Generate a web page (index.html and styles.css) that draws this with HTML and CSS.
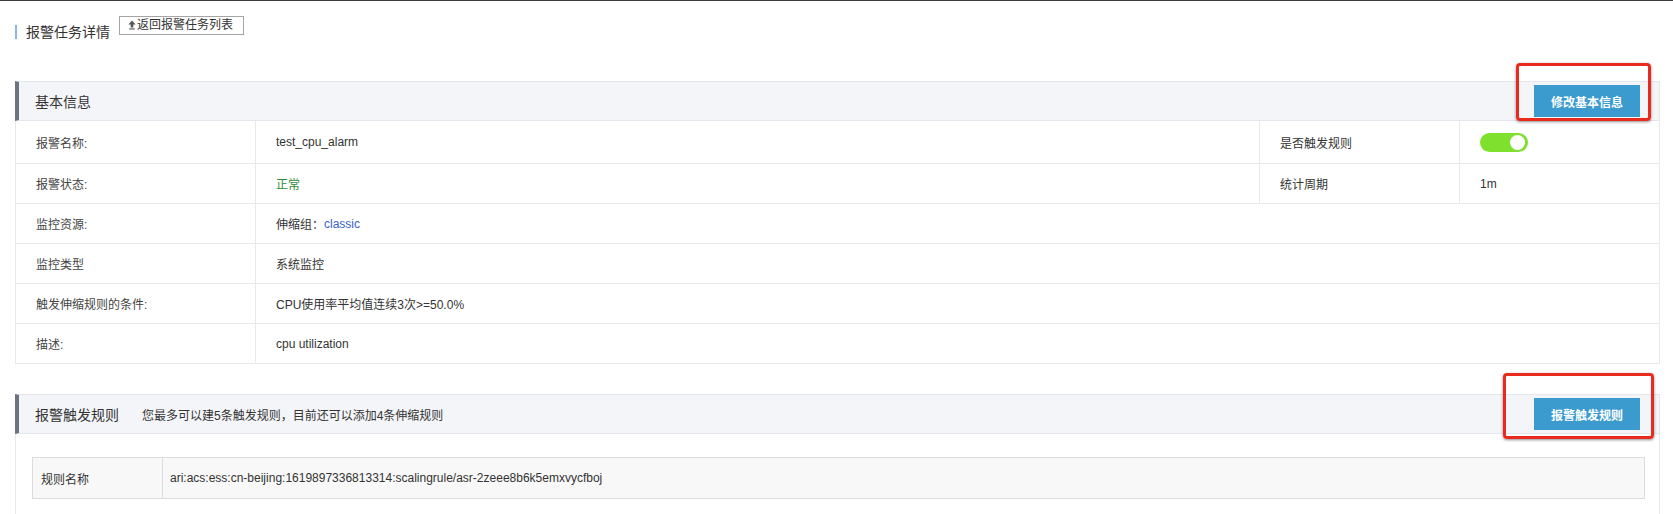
FILE: index.html
```html
<!DOCTYPE html>
<html lang="zh-CN">
<head>
<meta charset="utf-8">
<title>报警任务详情</title>
<link rel="stylesheet" href="styles.css">
</head>
<body>
<div class="topline"></div>
<div class="page">
  <div class="title-row">
    <h1 class="page-title">报警任务详情</h1>
    <button class="back-btn" type="button"><svg class="back-icon" width="8" height="10" viewBox="0 0 8 10"><path d="M4 0.5 L7.6 4.6 H5.3 V7.4 H2.7 V4.6 H0.4 Z" fill="#555"/><rect x="1.2" y="8.4" width="5.6" height="1.1" fill="#555"/></svg>返回报警任务列表</button>
  </div>

  <section class="panel panel-basic">
    <div class="panel-head">
      <span class="panel-title">基本信息</span>
      <button class="primary-btn" type="button">修改基本信息</button>
    </div>
    <div class="info-grid">
      <div class="cell label tall">报警名称:</div>
      <div class="cell tall">test_cpu_alarm</div>
      <div class="cell tall">是否触发规则</div>
      <div class="cell tall last"><span class="switch"><span class="knob"></span></span></div>

      <div class="cell label">报警状态:</div>
      <div class="cell ok">正常</div>
      <div class="cell">统计周期</div>
      <div class="cell last">1m</div>

      <div class="cell label">监控资源:</div>
      <div class="cell wide last">伸缩组：<span class="link">classic</span></div>

      <div class="cell label">监控类型</div>
      <div class="cell wide last">系统监控</div>

      <div class="cell label">触发伸缩规则的条件:</div>
      <div class="cell wide last">CPU使用率平均值连续3次&gt;=50.0%</div>

      <div class="cell label">描述:</div>
      <div class="cell wide last">cpu utilization</div>
    </div>
  </section>

  <section class="panel panel-rules">
    <div class="panel-head">
      <span class="panel-title">报警触发规则</span>
      <span class="panel-sub">您最多可以建5条触发规则，目前还可以添加4条伸缩规则</span>
      <button class="primary-btn" type="button">报警触发规则</button>
    </div>
    <div class="panel-body">
      <div class="rule-table">
        <div class="rule-label">规则名称</div>
        <div class="rule-value">ari:acs:ess:cn-beijing:1619897336813314:scalingrule/asr-2zeee8b6k5emxvycfboj</div>
      </div>
    </div>
  </section>
</div>

<div class="mark mark-1"></div>
<div class="mark mark-2"></div>
</body>
</html>
```

FILE: styles.css
```css
* { box-sizing: border-box; }

html, body {
  margin: 0;
  padding: 0;
  background: #fff;
  font-family: "Liberation Sans", "Noto Sans CJK SC", Arial, sans-serif;
  color: #333;
}

body { position: relative; overflow: hidden; }

.topline {
  height: 1px;
  background: #3d3d3d;
}

.page {
  padding: 0 13px 0 15px;
}

.title-row {
  display: flex;
  align-items: flex-start;
  padding-top: 15px;
}

.page-title {
  margin: 9px 0 0 0;
  padding-left: 9px;
  border-left: 2px solid #8ab6e0;
  font-size: 14px;
  line-height: 14px;
  height: 14px;
  font-weight: normal;
  color: #333;
}

.back-btn {
  margin-left: 9px;
  height: 19px;
  width: 125px;
  padding: 0 0 0 8px;
  border: 1px solid #a5a5a5;
  background: #fff;
  font-family: inherit;
  font-size: 12px;
  line-height: 17px;
  color: #333;
  display: flex;
  align-items: center;
  gap: 1px;
}

.back-icon { display: block; margin-top: -1px; }

.panel-basic { margin-top: 42px; }
.panel-rules { margin-top: 30px; }

.panel-head {
  height: 40px;
  display: flex;
  align-items: center;
  background: #f4f5f9;
  border: 1px solid #e3e6eb;
  border-left: 4px solid #6b7480;
  padding: 0 19px 0 16px;
}

.panel-title {
  font-size: 14px;
  color: #333;
}

.panel-sub {
  margin-left: 23px;
  font-size: 12px;
  color: #333;
}

.primary-btn {
  margin-left: auto;
  width: 106px;
  height: 32px;
  border: none;
  background: #3b9bcf;
  color: #fff;
  font-family: inherit;
  font-size: 12px;
  font-weight: bold;
  padding: 0;
}

.info-grid {
  display: grid;
  grid-template-columns: 240px 1004px 200px 1fr;
  border-left: 1px solid #e8e8e8;
  border-right: 1px solid #e8e8e8;
}

.cell {
  height: 40px;
  display: flex;
  align-items: center;
  padding-left: 20px;
  font-size: 12px;
  color: #333;
  border-bottom: 1px solid #e8e8e8;
  border-right: 1px solid #e8e8e8;
}

.cell.tall { height: 43px; }
.cell.last { border-right: none; }
.cell.wide { grid-column: 2 / -1; }
.cell.label { color: #444; }
.cell.ok { color: #2f8f3a; }

.link { color: #3a5fc8; }

.switch {
  position: relative;
  display: block;
  width: 48px;
  height: 19px;
  border-radius: 10px;
  background: #80e02e;
}

.knob {
  position: absolute;
  right: 3px;
  top: 2px;
  width: 15px;
  height: 15px;
  border-radius: 50%;
  background: #fff;
}

.panel-body {
  border-left: 1px solid #e8e8e8;
  border-right: 1px solid #e8e8e8;
  padding: 23px 14px 40px 16px;
}

.rule-table {
  display: flex;
  height: 42px;
  background: #f8f8f8;
  border: 1px solid #dcdcdc;
  font-size: 12px;
  color: #333;
}

.rule-label {
  width: 130px;
  padding-left: 8px;
  display: flex;
  align-items: center;
  border-right: 1px solid #dcdcdc;
}

.rule-value {
  flex: 1;
  padding-left: 7px;
  display: flex;
  align-items: center;
}

.mark {
  position: absolute;
  border: 3px solid #e82a1f;
  border-radius: 4px;
  box-shadow: 0 1px 3px rgba(0, 0, 0, 0.45);
}

.mark-1 { left: 1516px; top: 63px; width: 135px; height: 58px; }
.mark-2 { left: 1503px; top: 373px; width: 151px; height: 66px; }
```
